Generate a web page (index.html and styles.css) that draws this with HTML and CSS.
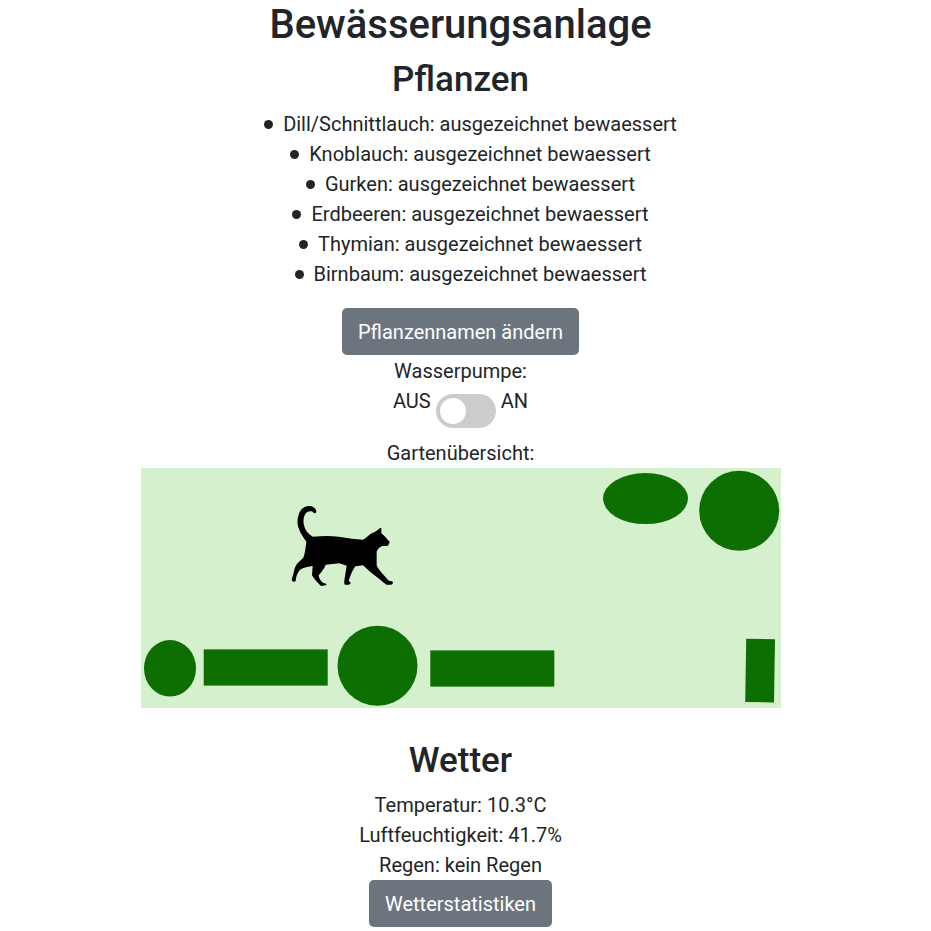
FILE: index.html
```html
<!DOCTYPE html>
<html lang="de">
<head>
<meta charset="utf-8">
<meta name="viewport" content="width=device-width, initial-scale=1">
<title>Bewässerungsanlage</title>
<link rel="stylesheet" href="styles.css">
</head>
<body>
<main class="page">
  <h1 class="title">Bewässerungsanlage</h1>
  <section>
    <h2 class="heading">Pflanzen</h2>
    <ul class="plants">
      <li>Dill/Schnittlauch: ausgezeichnet bewaessert</li>
      <li>Knoblauch: ausgezeichnet bewaessert</li>
      <li>Gurken: ausgezeichnet bewaessert</li>
      <li>Erdbeeren: ausgezeichnet bewaessert</li>
      <li>Thymian: ausgezeichnet bewaessert</li>
      <li>Birnbaum: ausgezeichnet bewaessert</li>
    </ul>
    <button class="btn" type="button">Pflanzennamen ändern</button>
  </section>
  <section>
    <label class="line" for="pump">Wasserpumpe:</label>
    <div class="pump">
      <span>AUS</span>
      <input class="switch" id="pump" type="checkbox" role="switch">
      <span>AN</span>
    </div>
  </section>
  <section class="overview">
    <p class="line">Gartenübersicht:</p>
    <svg class="garden" viewBox="0 0 640 240" role="img" aria-label="Gartenübersicht">
      <rect width="640" height="240" fill="#d5f0cc"/>
      <g fill="#0d6e02">
        <ellipse cx="504.5" cy="30.6" rx="42.5" ry="25.5"/>
        <circle cx="598.2" cy="42.8" r="40"/>
        <ellipse cx="29" cy="200.3" rx="26" ry="28.3"/>
        <rect x="62.7" y="181.4" width="124" height="36.2"/>
        <circle cx="236.5" cy="197.8" r="40"/>
        <rect x="289.3" y="182.4" width="124" height="36.2"/>
        <path d="M605.2 170.8 634 171.2 633 234.5 604.2 234Z"/>
      </g>
      <svg x="139" y="27" width="125" height="100" viewBox="0 0 375 300">
        <path d="M99 125C124 123 151 122 176 125L216 131 249 134C259 129 266 121 275 115 285 111 293 106 301 98L304 100 304 115C311 121 319 128 324 136L329 140C328 147 325 151 321 153L307 153C300 154 294 162 290 169L290 211C294 222 303 231 311 240L325 256C329 260 338 257 339 263 338 269 330 270 319 269L298 252 271 231 249 211 226 214C220 222 215 233 211 243L206 257 212 263C212 269 203 270 195 269 191 266 193 258 194 250L200 212 178 205 137 209C133 221 124 231 116 241 117 250 122 259 130 264L139 266C141 271 136 273 122 272L105 254 96 241 98 213C86 214 70 218 60 224 52 233 48 244 47 258 43 262 37 261 35 254L40 237C43 222 47 209 56 202L70 188C76 172 77 154 79 140 70 127 61 115 57 102 51 89 51 73 56 59 61 43 71 34 85 33 100 32 109 42 109 50 107 56 102 56 98 50 88 46 78 51 74 60 68 75 70 89 76 102 81 112 89 121 99 125Z"/>
      </svg>
    </svg>
  </section>
  <section>
    <h2 class="heading">Wetter</h2>
    <p class="line">Temperatur: 10.3°C</p>
    <p class="line">Luftfeuchtigkeit: 41.7%</p>
    <p class="line">Regen: kein Regen</p>
    <button class="btn" type="button">Wetterstatistiken</button>
  </section>
</main>
</body>
</html>
```
FILE: styles.css
```css
* {
  box-sizing: border-box;
}

body {
  margin: 0;
  background: #fff;
  color: #212529;
  font: 400 20px/30px Roboto, sans-serif;
}

.page {
  padding-right: 10px;
  text-align: center;
}

.title,
.heading {
  margin: 0 0 8px;
  font-weight: 500;
}

.title {
  font-size: 40px;
  line-height: 50px;
}

.heading {
  font-size: 35px;
  line-height: 43px;
}

.plants {
  margin: 0 0 19px;
  padding: 0 0 0 20px;
  list-style: none;
}

.plants li {
  display: flex;
  justify-content: center;
  align-items: center;
  gap: 10px;
}

.plants li::before {
  content: "";
  width: 9px;
  height: 9px;
  border-radius: 50%;
  background: #212529;
}

.btn {
  display: block;
  margin: 0 auto 1px;
  padding: 9px 16px 8px;
  border: 0;
  border-radius: 5px;
  background: #6c757d;
  color: #fff;
  font: inherit;
  cursor: pointer;
}

.line {
  display: block;
  margin: 0;
}

.pump {
  display: flex;
  justify-content: center;
  align-items: flex-start;
  gap: 5px;
}

.switch {
  appearance: none;
  width: 60px;
  height: 34px;
  margin: 8px 0 10px;
  padding: 4px;
  border-radius: 17px;
  background: #ccc;
  cursor: pointer;
}

.switch::before {
  content: "";
  display: block;
  width: 26px;
  height: 26px;
  border-radius: 50%;
  background: #fff;
}

.switch:checked {
  background: #2196f3;
}

.switch:checked::before {
  margin-left: auto;
}

.overview {
  margin-bottom: 31px;
}

.garden {
  display: block;
  width: 100%;
  max-width: 640px;
  margin: 0 auto;
}
```
